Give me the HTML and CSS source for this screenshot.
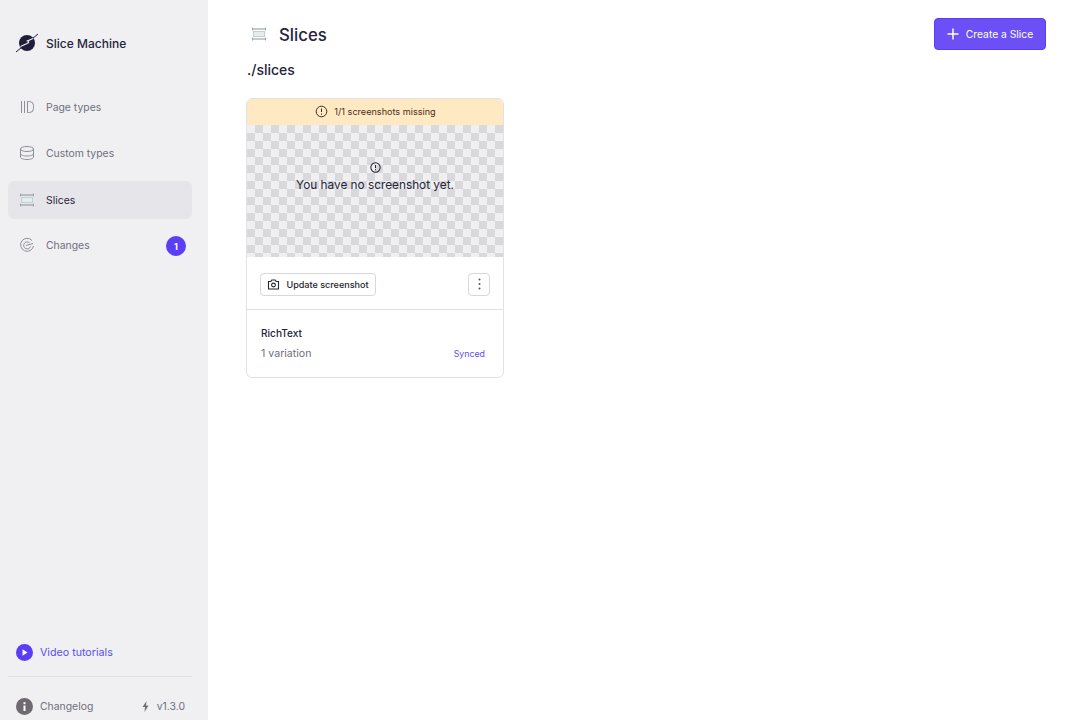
FILE: index.html
```html
<!DOCTYPE html>
<html lang="en">
<head>
<meta charset="utf-8">
<title>Slices - Slice Machine</title>
<link rel="stylesheet" href="styles.css">
</head>
<body>
<div class="app">
  <aside class="sidebar">
    <div class="brand">
      <svg class="logo" width="24" height="20" viewBox="0 0 24 20"><circle cx="12" cy="10" r="8" fill="#1f1d3a"/><path d="M1 19 23 1" stroke="#1f1d3a" stroke-width="1"/><path d="M5.500 13.500 12 10.500 Q15 9 12.500 8 L18 5.500" stroke="#f0f0f3" stroke-width="1.300" fill="none"/></svg>
      <span class="brand-name">Slice Machine</span>
    </div>
    <nav class="nav">
      <a class="nav-item nav-page">
        <svg class="nav-icon" width="16" height="16" viewBox="0 0 16 16" fill="none" stroke="#8e8e98"><path d="M2.500 2v12M5.500 2v12M8.500 2.500h2a4 4 0 0 1 4 4v3a4 4 0 0 1-4 4h-2z"/></svg>
        <span>Page types</span>
      </a>
      <a class="nav-item nav-custom">
        <svg class="nav-icon" width="16" height="16" viewBox="0 0 16 16" fill="none" stroke="#8e8e98"><ellipse cx="8" cy="4" rx="6.500" ry="2.500"/><path d="M1.500 4v8c0 1.500 3 2.500 6.500 2.500s6.500-1 6.500-2.500V4M1.500 8.500c0 1.500 3 2.500 6.500 2.500s6.500-1 6.500-2.500"/></svg>
        <span>Custom types</span>
      </a>
      <a class="nav-item nav-active">
        <svg class="nav-icon" width="16" height="16" viewBox="0 0 16 16" fill="none"><rect x="2.500" y="5.500" width="11" height="5" fill="#e4ecec" stroke="#bfd0d2"/><path d="M1.500 1.500v3M14.500 1.500v3M1.500 11.500v3M14.500 11.500v3" stroke="#a5abb2"/><path d="M1.500 3h13M1.500 13h13" stroke="#8e8e98"/></svg>
        <span>Slices</span>
      </a>
      <a class="nav-item nav-changes">
        <svg class="nav-icon" width="16" height="16" viewBox="0 0 16 16" fill="none" stroke="#8e8e98"><path d="M13 3.500A6.500 6.500 0 1 0 14.500 9M10.500 5.800A3.500 3.500 0 1 0 11.500 9.500M7 8.500 14 6.500"/></svg>
        <span>Changes</span>
        <span class="badge">1</span>
      </a>
    </nav>
    <div class="side-foot">
      <a class="video">
        <svg width="17" height="17" viewBox="0 0 17 17"><circle cx="8.500" cy="8.500" r="8.500" fill="#5b3df5"/><path d="M6.500 5.200v6.600l5-3.300z" fill="#fff"/></svg>
        <span>Video tutorials</span>
      </a>
      <div class="foot-row">
        <a class="changelog">
          <svg width="17" height="17" viewBox="0 0 17 17"><circle cx="8.500" cy="8.500" r="8.500" fill="#6f6a72"/><rect x="7.500" y="7.500" width="2" height="5.500" fill="#fff"/><rect x="7.500" y="4.200" width="2" height="2" fill="#fff"/></svg>
          <span>Changelog</span>
        </a>
        <span class="version">
          <svg width="7" height="11" viewBox="0 0 7 11"><path d="M4.500 0 0.500 6h2.500L2.500 11 6.500 4.500H4z" fill="#6f6f78"/></svg>
          <span>v1.3.0</span>
        </span>
      </div>
    </div>
  </aside>
  <main class="main">
    <header class="head">
      <div class="title">
        <svg width="16" height="16" viewBox="0 0 16 16" fill="none"><rect x="2.500" y="5.500" width="11" height="5" fill="#e4ecec" stroke="#bfd0d2"/><path d="M1.500 1.500v3M14.500 1.500v3M1.500 11.500v3M14.500 11.500v3" stroke="#a5abb2"/><path d="M1.500 3h13M1.500 13h13" stroke="#8e8e98"/></svg>
        <h1>Slices</h1>
      </div>
      <button class="create">
        <svg width="12" height="12" viewBox="0 0 12 12"><path d="M6 .5v11M.5 6h11" stroke="#fff" stroke-width="1.500"/></svg>
        <span>Create a Slice</span>
      </button>
    </header>
    <h2 class="path">./slices</h2>
    <article class="card">
      <div class="warn">
        <svg width="13" height="13" viewBox="0 0 13 13" fill="none" stroke="#3a2a1c"><circle cx="6.500" cy="6.500" r="5.300"/><path d="M6.500 3.500v3.500M6.500 8.500v1.200"/></svg>
        <span>1/1 screenshots missing</span>
      </div>
      <div class="shot">
        <svg width="11" height="11" viewBox="0 0 13 13" fill="none" stroke="#1f1f2a" stroke-width="1.200"><circle cx="6.500" cy="6.500" r="5.500"/><path d="M6.500 3.500v3.500M6.500 8.500v1.200"/></svg>
        <span>You have no screenshot yet.</span>
      </div>
      <div class="actions">
        <button class="update">
          <svg width="13" height="13" viewBox="0 0 13 13" fill="none" stroke="#25252d" stroke-width="1.100"><path d="M1.500 3.500h2.300l1-1.500h3.400l1 1.500h2.300v7.500h-10z"/><circle cx="6.500" cy="7" r="1.900"/></svg>
          <span>Update screenshot</span>
        </button>
        <button class="more" aria-label="More">
          <svg width="3" height="12" viewBox="0 0 3 12"><circle cx="1.500" cy="1.500" r="1" fill="#55555f"/><circle cx="1.500" cy="6" r="1" fill="#55555f"/><circle cx="1.500" cy="10.500" r="1" fill="#55555f"/></svg>
        </button>
      </div>
      <div class="info">
        <div class="slice-name">RichText</div>
        <div class="meta">
          <span class="variation">1 variation</span>
          <span class="synced">Synced</span>
        </div>
      </div>
    </article>
  </main>
</div>
</body>
</html>
```
FILE: styles.css
```css
* { box-sizing: border-box; }
html, body { margin: 0; height: 100%; }
body { font-family: Inter, "Liberation Sans", sans-serif; color: #1f1f2e; background: #fff; overflow: hidden; }
svg { display: block; flex: none; }
.app { display: flex; height: 720px; }

.sidebar { width: 208px; flex: none; background: #f0f0f3; padding: 0 16px 0 8px; display: flex; flex-direction: column; }
.brand { display: flex; align-items: center; gap: 7px; height: 24px; margin: 31px 0 0 7px; }
.brand-name { font-size: 12px; font-weight: 500; color: #25253a; }
.nav { margin-top: 33px; display: flex; flex-direction: column; }
.nav-item { display: flex; align-items: center; gap: 11px; height: 38px; padding-left: 11px; padding-right: 6px; border-radius: 6px; font-size: 10.400px; color: #6f6f7d; }
.nav-page { margin-bottom: 8px; }
.nav-custom { margin-bottom: 9px; }
.nav-active { background: #e6e6ea; color: #25253a; margin-bottom: 7px; }
.nav-changes .badge { margin-left: auto; margin-top: 2px; }
.badge { width: 20px; height: 20px; border-radius: 50%; background: #5b3df5; color: #fff; font-size: 9px; font-weight: 700; display: flex; align-items: center; justify-content: center; }

.side-foot { margin-top: auto; }
.video { display: flex; align-items: center; gap: 7px; padding-left: 8px; font-size: 10.700px; color: #5b4ff0; height: 17px; margin: 1px 0 15px; }
.foot-row { border-top: 1px solid #e0e0e3; display: flex; align-items: center; justify-content: space-between; padding: 21px 7px 5px 8px; font-size: 10.400px; color: #6f6f7d; }
.changelog { display: flex; align-items: center; gap: 7px; }
.version { display: flex; align-items: center; gap: 8px; }

.main { flex: 1; padding: 18px 34px 0 38px; }
.head { display: flex; justify-content: space-between; align-items: flex-start; height: 32px; }
.title { display: flex; align-items: center; gap: 12px; height: 32px; margin-left: 5px; }
h1 { margin: 2px 0 0; font-size: 16.800px; font-weight: 500; color: #25253a; line-height: 30px; }
.create { height: 32px; width: 112px; border: 1px solid #5b3df5; border-radius: 4px; background: #6c4ff5; color: #fff; font: 400 10.300px Inter, sans-serif; display: flex; align-items: center; justify-content: center; gap: 7px; padding: 0; }
.path { margin: 10px 0 18px 1px; font-size: 14px; font-weight: 500; line-height: 20px; color: #25253a; }

.card { width: 258px; height: 280px; border: 1px solid #e2e2e6; border-radius: 6px; overflow: hidden; background: #fff; }
.warn { height: 26px; padding: 0 0 1px 1px; background: #fee9c3; display: flex; align-items: center; justify-content: center; gap: 6px; font-size: 9.100px; color: #4a2f20; }
.shot { height: 132px; padding-top: 37px; background-color: #f0f0f3; background-image: conic-gradient(#d9d9dc 25%, transparent 0 50%, #d9d9dc 0 75%, transparent 0); background-size: 16px 16px; display: flex; flex-direction: column; align-items: center; font-size: 11.800px; color: #25253a; }
.shot span { line-height: 16px; margin-top: 4px; }
.actions { height: 53px; display: flex; align-items: center; justify-content: space-between; padding: 2px 13px 0; border-bottom: 1px solid #e2e2e6; }
.update { height: 23px; width: 116px; border: 1px solid #d8d8dc; border-radius: 4px; background: #fff; display: flex; align-items: center; justify-content: center; gap: 6px; padding: 0; font: 500 9.050px Inter, sans-serif; color: #25252d; }
.more { width: 22px; height: 23px; border: 1px solid #d8d8dc; border-radius: 4px; background: #fff; display: flex; align-items: center; justify-content: center; padding: 0; }
.info { padding: 16px 14px 0; }
.slice-name { font-size: 10.100px; font-weight: 500; line-height: 14px; color: #25253a; }
.meta { display: flex; justify-content: space-between; align-items: center; margin-top: 7px; padding-right: 4px; line-height: 14px; }
.variation { font-size: 10.600px; color: #6f6f7d; }
.synced { font-size: 8.800px; color: #5b4ff0; }
```
